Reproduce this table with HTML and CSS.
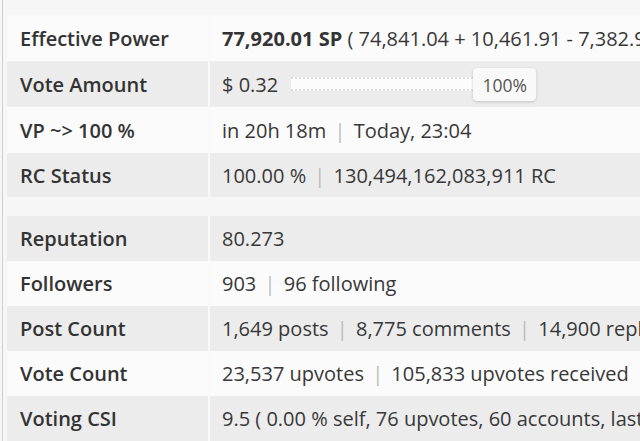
FILE: index.html
```html
<!DOCTYPE html>
<html>
<head>
<meta charset="utf-8">
<link rel="stylesheet" href="styles.css">
</head>
<body>
<div class="page">
  <div class="table">
    <div class="row odd"><div class="label">Effective Power</div><div class="value"><b>77,920.01 SP</b> ( 74,841.04 + 10,461.91 - 7,382.94 )</div></div>
    <div class="row even"><div class="label">Vote Amount</div><div class="value"><span>$ 0.32</span><div class="slider"><div class="track"></div><div class="handle">100%</div></div></div></div>
    <div class="row odd"><div class="label">VP ~&gt; 100 %</div><div class="value">in 20h 18m <span class="sep">|</span> Today, 23:04</div></div>
    <div class="row even short"><div class="label">RC Status</div><div class="value">100.00 % <span class="sep">|</span> 130,494,162,083,911 RC</div></div>
  </div>
  <div class="table second">
    <div class="row even"><div class="label">Reputation</div><div class="value">80.273</div></div>
    <div class="row odd"><div class="label">Followers</div><div class="value">903 <span class="sep">|</span> 96 following</div></div>
    <div class="row even"><div class="label">Post Count</div><div class="value">1,649 posts <span class="sep">|</span> 8,775 comments <span class="sep">|</span> 14,900 replies</div></div>
    <div class="row odd"><div class="label">Vote Count</div><div class="value">23,537 upvotes <span class="sep">|</span> 105,833 upvotes received</div></div>
    <div class="row even"><div class="label">Voting CSI</div><div class="value">9.5 ( 0.00 % self, 76 upvotes, 60 accounts, last 7d )</div></div>
  </div>
</div>
</body>
</html>
```
FILE: styles.css
```css
html, body {
  margin: 0;
  padding: 0;
  background: #f6f6f6;
  overflow: hidden;
  height: 441px;
}
body {
  font-family: "Open Sans", "Noto Sans", sans-serif;
  color: #333;
}
.page {
  margin-left: 2px;
  border-left: 1px solid #cfcfcf;
  padding: 15px 0 0 4px;
  height: 441px;
  box-sizing: border-box;
}
.table {
  width: 800px;
}
.second {
  margin-top: 19px;
}
.row {
  display: grid;
  grid-template-columns: 201px 1fr;
  height: 46px;
  align-items: stretch;
}
.second .row { height: 45px; }
.row.short { height: 44px; }
.odd { background: #fbfbfb; }
.even { background: #ececec; }
.label {
  font-size: 20px;
  font-weight: 600;
  padding-left: 13px;
  display: flex;
  align-items: center;
  white-space: nowrap;
  color: #333;
}
.value {
  font-size: 20px;
  border-left: 2px solid #f9f9f9;
  padding-left: 12px;
  display: flex;
  align-items: center;
  white-space: pre;
  color: #383838;
}
.value b { font-weight: 700; color: #333; }
.sep {
  color: #bbb;
  margin: 0 3px;
}
.slider {
  position: relative;
  margin-left: 13px;
  width: 230px;
  height: 14px;
}
.track {
  height: 10px;
  border-top: 2px dotted #dedede;
  border-bottom: 2px dotted #dedede;
  background: #fcfcfc;
}
.handle {
  position: absolute;
  left: 182px;
  top: -9px;
  width: 63px;
  height: 33px;
  box-sizing: border-box;
  background: #f9f9f9;
  border-radius: 4px;
  box-shadow: 0 1px 3px rgba(0,0,0,0.18);
  font-size: 17.5px;
  color: #555;
  display: flex;
  align-items: center;
  justify-content: center;
}
```
